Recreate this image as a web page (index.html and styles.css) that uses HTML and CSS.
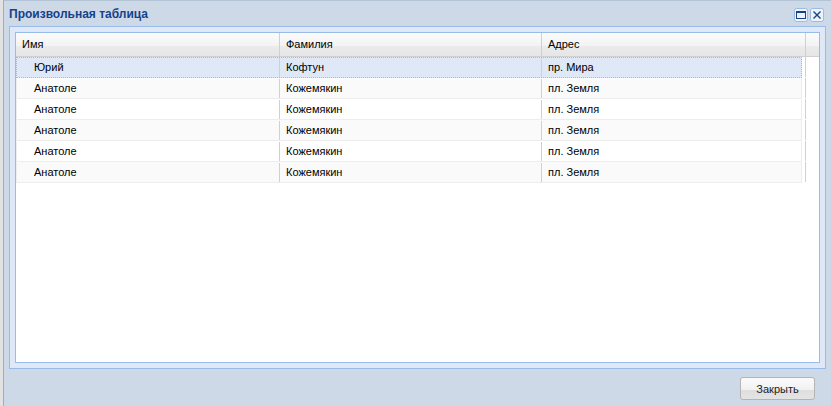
FILE: index.html
```html
<!DOCTYPE html>
<html lang="ru">
<head>
<meta charset="utf-8">
<link rel="stylesheet" href="styles.css">
</head>
<body>
<div class="win">
  <div class="win-head">
    <div class="win-title">Произвольная таблица</div>
    <div class="tools">
      <span class="tool">
        <svg width="14" height="14" viewBox="0 0 14 14"><rect x="0.5" y="0.5" width="13" height="13" rx="2" fill="#eef3fa" stroke="#99bbe8"/><rect x="2.5" y="3.5" width="9" height="7" fill="none" stroke="#15428b"/><rect x="2" y="3" width="10" height="2" fill="#15428b"/></svg>
      </span>
      <span class="tool">
        <svg width="14" height="14" viewBox="0 0 14 14"><rect x="0.5" y="0.5" width="13" height="13" rx="2" fill="#eef3fa" stroke="#99bbe8"/><path d="M3.5 3.5 L10.5 10.5 M10.5 3.5 L3.5 10.5" stroke="#15428b" stroke-width="1.4"/></svg>
      </span>
    </div>
  </div>
  <div class="win-body">
    <div class="grid">
      <div class="grid-head">
        <div class="hcell c1">Имя</div>
        <div class="hcell c2">Фамилия</div>
        <div class="hcell c3">Адрес</div>
        <div class="hcell sb"></div>
      </div>
      <div class="rows">
        <div class="row-wrap"><div class="row sel"><div class="cell c1 first">Юрий</div><div class="cell c2">Кофтун</div><div class="cell c3 last">пр. Мира</div></div><span class="tail"></span></div>
        <div class="row-wrap"><div class="row alt"><div class="cell c1 first">Анатоле</div><div class="cell c2">Кожемякин</div><div class="cell c3 last">пл. Земля</div></div><span class="tail"></span></div>
        <div class="row-wrap"><div class="row"><div class="cell c1 first">Анатоле</div><div class="cell c2">Кожемякин</div><div class="cell c3 last">пл. Земля</div></div><span class="tail"></span></div>
        <div class="row-wrap"><div class="row alt"><div class="cell c1 first">Анатоле</div><div class="cell c2">Кожемякин</div><div class="cell c3 last">пл. Земля</div></div><span class="tail"></span></div>
        <div class="row-wrap"><div class="row"><div class="cell c1 first">Анатоле</div><div class="cell c2">Кожемякин</div><div class="cell c3 last">пл. Земля</div></div><span class="tail"></span></div>
        <div class="row-wrap"><div class="row alt"><div class="cell c1 first">Анатоле</div><div class="cell c2">Кожемякин</div><div class="cell c3 last">пл. Земля</div></div><span class="tail"></span></div>
      </div>
    </div>
  </div>
  <div class="win-foot">
    <button class="btn">Закрыть</button>
  </div>
</div>
</body>
</html>
```
FILE: styles.css
```css
* { box-sizing: border-box; }
html, body { margin: 0; padding: 0; }
body {
  background: #e2e2e2;
  width: 831px;
  height: 406px;
  overflow: hidden;
  font-family: "Liberation Sans", Arial, sans-serif;
  font-size: 11px;
  color: #000;
  padding-left: 3px;
}
.win {
  height: 406px;
  background: #cdd9e7;
  border-left: 1px solid #a4acb6;
  border-top: 1px solid #b3c3d6;
  display: flex;
  flex-direction: column;
}
.win-head {
  height: 25px;
  display: flex;
  align-items: center;
  padding: 0 7px 0 5px;
}
.win-title {
  flex: 1;
  font-weight: bold;
  font-size: 12px;
  color: #15428b;
  padding-top: 1px;
}
.tools { display: flex; gap: 2px; padding-top: 3px; }
.tool { display: block; width: 14px; height: 14px; }
.tool svg { display: block; }
.win-body {
  margin: 0 5px;
  height: 343px;
  border: 1px solid #99bbe8;
  background: #dfe8f6;
  padding: 5px;
}
.grid {
  height: 100%;
  border: 1px solid #99bbe8;
  background: #fff;
}
.grid-head {
  display: flex;
  height: 24px;
  background: linear-gradient(#fbfbfb 0%, #f3f3f3 55%, #ebebeb 56%, #e6e6e6 100%);
  border-bottom: 1px solid #d0d0d0;
}
.hcell {
  border-right: 1px solid #d0d0d0;
  padding-left: 6px;
  line-height: 23px;
}
.c1 { width: 264px; }
.c2 { width: 262px; }
.c3 { width: 264px; }
.sb { width: 13px; border-right: 0; }
.row-wrap {
  display: flex;
  height: 21px;
}
.row {
  width: 786px;
  display: flex;
  border: 1px solid #ededed;
  border-top-color: #fff;
  background: #fff;
}
.row.alt { background: #fafafa; border-top-color: #fafafa; }
.row.sel {
  background: #dfe8f6;
  border: 1px dotted #a3bae9;
}
.cell {
  padding-left: 6px;
  line-height: 19px;
  border-right: 1px solid #d0d0d0;
  white-space: nowrap;
}
.row .c1 { width: 263px; }
.cell.first { padding-left: 17px; }
.cell.last { border-right: 0; flex: 1; }
.tail {
  display: block;
  width: 1px;
  margin: 0 0 1px 3px;
  background: #d0d0d0;
}
.win-foot {
  flex: 1;
  display: flex;
  justify-content: flex-end;
  align-items: flex-start;
  padding: 8px 16px 0 0;
}
.btn {
  width: 75px;
  height: 23px;
  font-family: "Liberation Sans", Arial, sans-serif;
  font-size: 11px;
  color: #222;
  border: 1px solid #b4b4b4;
  border-radius: 3px;
  background: linear-gradient(#fbfbfb 0%, #f1f1f1 55%, #dedede 56%, #e4e4e4 100%);
  padding: 0;
}
```
